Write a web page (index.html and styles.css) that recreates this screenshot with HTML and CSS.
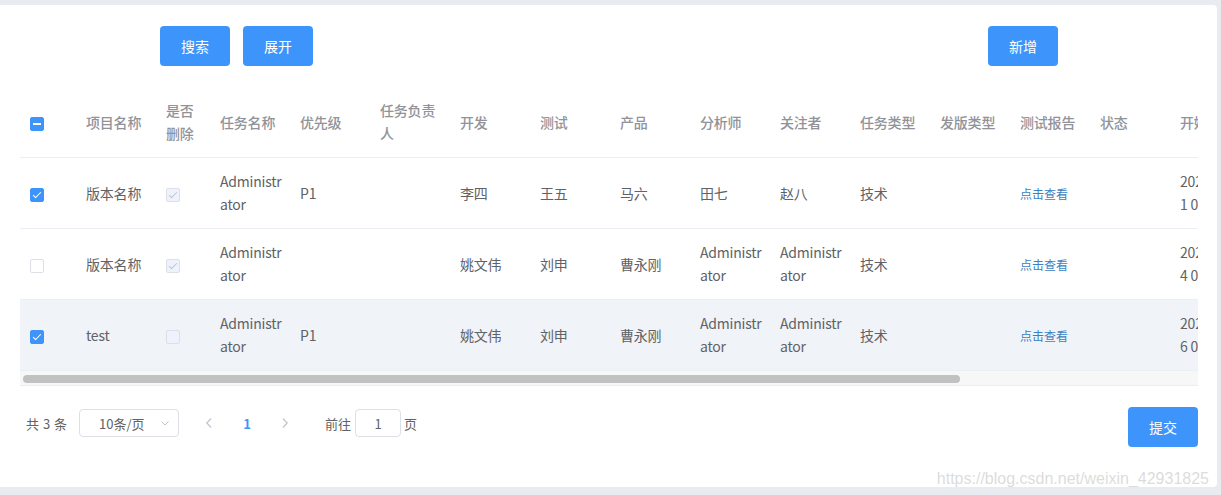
FILE: index.html
```html
<!DOCTYPE html>
<html lang="zh-CN">
<head>
    <meta charset="UTF-8">
    <meta name="viewport" content="width=device-width, initial-scale=1.0">
    <title>任务列表</title>
    <link rel="stylesheet" href="styles.css">
</head>
<body>

<div class="card">

    <!-- кнопки сверху -->
    <div class="toolbar">
        <button class="btn">搜索</button>
        <button class="btn">展开</button>
        <button class="btn btn-add">新增</button>
    </div>

    <!-- таблица -->
    <div class="table-wrap">
        <div class="table-body">
            <table class="task-table">
                <colgroup>
                    <col style="width:56px">
                    <col style="width:80px">
                    <col style="width:54px">
                    <col style="width:80px">
                    <col style="width:80px">
                    <col style="width:80px">
                    <col style="width:80px">
                    <col style="width:80px">
                    <col style="width:80px">
                    <col style="width:80px">
                    <col style="width:80px">
                    <col style="width:80px">
                    <col style="width:80px">
                    <col style="width:80px">
                    <col style="width:80px">
                    <col style="width:80px">
                    <col style="width:80px">
                    <col style="width:170px">
                </colgroup>
                <thead>
                    <tr>
                        <th><div class="cell"><span class="checkbox indeterminate"></span></div></th>
                        <th><div class="cell">项目名称</div></th>
                        <th><div class="cell">是否删除</div></th>
                        <th><div class="cell">任务名称</div></th>
                        <th><div class="cell">优先级</div></th>
                        <th><div class="cell">任务负责人</div></th>
                        <th><div class="cell">开发</div></th>
                        <th><div class="cell">测试</div></th>
                        <th><div class="cell">产品</div></th>
                        <th><div class="cell">分析师</div></th>
                        <th><div class="cell">关注者</div></th>
                        <th><div class="cell">任务类型</div></th>
                        <th><div class="cell">发版类型</div></th>
                        <th><div class="cell">测试报告</div></th>
                        <th><div class="cell">状态</div></th>
                        <th><div class="cell">开始时间</div></th>
                        <th><div class="cell">结束时间</div></th>
                        <th><div class="cell">操作</div></th>
                    </tr>
                </thead>
                <tbody>
                    <tr>
                        <td><div class="cell"><span class="checkbox checked"></span></div></td>
                        <td><div class="cell">版本名称</div></td>
                        <td><div class="cell"><span class="checkbox disabled checked"></span></div></td>
                        <td><div class="cell">Administrator</div></td>
                        <td><div class="cell">P1</div></td>
                        <td><div class="cell"></div></td>
                        <td><div class="cell">李四</div></td>
                        <td><div class="cell">王五</div></td>
                        <td><div class="cell">马六</div></td>
                        <td><div class="cell">田七</div></td>
                        <td><div class="cell">赵八</div></td>
                        <td><div class="cell">技术</div></td>
                        <td><div class="cell"></div></td>
                        <td><div class="cell"><a class="link">点击查看</a></div></td>
                        <td><div class="cell"></div></td>
                        <td><div class="cell date">2020-07-2<br>1 08:00</div></td>
                        <td><div class="cell date">2020-07-2<br>8 18:00</div></td>
                        <td><div class="cell"></div></td>
                    </tr>
                    <tr>
                        <td><div class="cell"><span class="checkbox"></span></div></td>
                        <td><div class="cell">版本名称</div></td>
                        <td><div class="cell"><span class="checkbox disabled checked"></span></div></td>
                        <td><div class="cell">Administrator</div></td>
                        <td><div class="cell"></div></td>
                        <td><div class="cell"></div></td>
                        <td><div class="cell">姚文伟</div></td>
                        <td><div class="cell">刘申</div></td>
                        <td><div class="cell">曹永刚</div></td>
                        <td><div class="cell">Administrator</div></td>
                        <td><div class="cell">Administrator</div></td>
                        <td><div class="cell">技术</div></td>
                        <td><div class="cell"></div></td>
                        <td><div class="cell"><a class="link">点击查看</a></div></td>
                        <td><div class="cell"></div></td>
                        <td><div class="cell date">2020-07-2<br>4 09:00</div></td>
                        <td><div class="cell date">2020-07-3<br>0 18:00</div></td>
                        <td><div class="cell"></div></td>
                    </tr>
                    <tr class="hover">
                        <td><div class="cell"><span class="checkbox checked"></span></div></td>
                        <td><div class="cell">test</div></td>
                        <td><div class="cell"><span class="checkbox disabled"></span></div></td>
                        <td><div class="cell">Administrator</div></td>
                        <td><div class="cell">P1</div></td>
                        <td><div class="cell"></div></td>
                        <td><div class="cell">姚文伟</div></td>
                        <td><div class="cell">刘申</div></td>
                        <td><div class="cell">曹永刚</div></td>
                        <td><div class="cell">Administrator</div></td>
                        <td><div class="cell">Administrator</div></td>
                        <td><div class="cell">技术</div></td>
                        <td><div class="cell"></div></td>
                        <td><div class="cell"><a class="link">点击查看</a></div></td>
                        <td><div class="cell"></div></td>
                        <td><div class="cell date">2020-07-2<br>6 09:00</div></td>
                        <td><div class="cell date">2020-08-0<br>1 18:00</div></td>
                        <td><div class="cell"></div></td>
                    </tr>
                </tbody>
            </table>
        </div>
        <!-- горизонтальный скролл -->
        <div class="scrollbar"><div class="thumb"></div></div>
    </div>

    <!-- пагинация и кнопка -->
    <div class="footer">
        <div class="pagination">
            <span class="total">共 3 条</span>
            <div class="sizes">
                <span>10条/页</span>
                <svg class="arrow" width="10" height="10" viewBox="0 0 10 10"><polyline points="1.5,3.5 5,7 8.5,3.5" fill="none" stroke="#c0c4cc" stroke-width="1"/></svg>
            </div>
            <span class="nav-btn">
                <svg width="8" height="12" viewBox="0 0 8 12"><polyline points="6,1.5 1.8,6 6,10.5" fill="none" stroke="#c0c4cc" stroke-width="1.2"/></svg>
            </span>
            <span class="nav-btn active">1</span>
            <span class="nav-btn">
                <svg width="8" height="12" viewBox="0 0 8 12"><polyline points="2,1.5 6.2,6 2,10.5" fill="none" stroke="#c0c4cc" stroke-width="1.2"/></svg>
            </span>
            <span class="jump">前往</span>
            <input class="page-input" type="text" value="1">
            <span class="jump-end">页</span>
        </div>
        <button class="btn">提交</button>
    </div>

    <div class="watermark">https://blog.csdn.net/weixin_42931825</div>
</div>

</body>
</html>
```

FILE: styles.css
```css
/* сброс */
* {
    margin: 0;
    padding: 0;
    box-sizing: border-box;
}

body {
    background-color: #e8ebef;
    font-family: "Noto Sans CJK SC", "Noto Sans", sans-serif;
    color: #606266;
    font-size: 14px;
}

/* карточка */
.card {
    position: relative;
    margin: 5px 4px 0 0;
    height: 482px;
    background-color: #fff;
    border-radius: 0 4px 4px 0;
    padding-top: 21px;
    overflow: hidden;
}

/* кнопки */
.btn {
    width: 70px;
    height: 40px;
    border: none;
    border-radius: 4px;
    background-color: #3d95fc;
    color: #fff;
    font-family: "Noto Sans CJK SC", sans-serif;
    font-size: 14px;
    cursor: pointer;
}

.toolbar {
    display: flex;
    gap: 13px;
    padding-left: 160px;
}

.btn-add {
    margin-left: 662px;
}

/* таблица */
.table-wrap {
    margin: 21px 0 0 20px;
    width: 1178px;
}

.table-body {
    overflow: hidden;
}

.task-table {
    table-layout: fixed;
    border-collapse: collapse;
    width: 1480px;
}

.task-table th,
.task-table td {
    padding: 12px 0;
    border-bottom: 1px solid #ebeef5;
    text-align: left;
    vertical-align: middle;
}

.task-table th {
    color: #909399;
    font-weight: 500;
}

.task-table .cell {
    padding: 0 5px 0 10px;
    line-height: 23px;
    letter-spacing: -0.2px;
    word-break: break-all;
}

.task-table .cell.date {
    white-space: nowrap;
}

.task-table tr.hover td {
    background-color: #f0f3f7;
}

.link {
    color: #3a82c2;
    font-size: 12px;
    letter-spacing: 0;
    cursor: pointer;
}

/* чекбоксы */
.checkbox {
    position: relative;
    display: inline-block;
    width: 14px;
    height: 14px;
    border: 1px solid #dcdfe6;
    border-radius: 2px;
    background-color: #fff;
    vertical-align: middle;
}

.checkbox.checked {
    background-color: #3d95fc;
    border-color: #3d95fc;
}

.checkbox.checked::after {
    content: "";
    position: absolute;
    left: 4px;
    top: 1px;
    width: 3px;
    height: 7px;
    border: 1px solid #fff;
    border-left: 0;
    border-top: 0;
    transform: rotate(45deg);
}

.checkbox.disabled {
    background-color: #edf2fc;
    border-color: #dcdfe6;
}

.checkbox.disabled.checked::after {
    border-color: #c0c4cc;
}

.checkbox.indeterminate {
    background-color: #3d95fc;
    border-color: #3d95fc;
}

.checkbox.indeterminate::before {
    content: "";
    position: absolute;
    left: 2px;
    right: 2px;
    top: 5px;
    height: 2px;
    background-color: #fff;
}

/* скролл */
.scrollbar {
    height: 15px;
    background-color: #f7f7f7;
    border-bottom: 1px solid #ebeef5;
    padding: 4px 0 0 3px;
}

.scrollbar .thumb {
    width: 937px;
    height: 8px;
    border-radius: 4px;
    background-color: #c1c1c1;
}

/* низ */
.footer {
    display: flex;
    justify-content: space-between;
    align-items: flex-start;
    margin-top: 21px;
    padding: 0 19px 0 26px;
}

.pagination {
    display: flex;
    align-items: center;
    margin-top: 2px;
    font-size: 13px;
    color: #606266;
}

.total {
    margin-right: 12px;
    word-spacing: 1px;
}

.sizes {
    display: flex;
    align-items: center;
    justify-content: space-between;
    width: 100px;
    height: 28px;
    border: 1px solid #dcdfe6;
    border-radius: 4px;
    padding: 0 8px 0 19px;
    margin-right: 11px;
}

.nav-btn {
    display: flex;
    align-items: center;
    justify-content: center;
    width: 38px;
    height: 28px;
    font-weight: bold;
}

.nav-btn.active {
    color: #3d95fc;
}

.jump {
    margin-left: 21px;
    margin-right: 4px;
}

.page-input {
    width: 46px;
    height: 28px;
    border: 1px solid #dcdfe6;
    border-radius: 4px;
    text-align: center;
    font-family: "Noto Sans CJK SC", sans-serif;
    font-size: 13px;
    color: #606266;
    outline: none;
}

.jump-end {
    margin-left: 3px;
}

/* водяной знак */
.watermark {
    position: absolute;
    right: 8px;
    bottom: -1px;
    font-family: "Liberation Sans", Arial, sans-serif;
    font-size: 16px;
    color: rgba(190, 190, 190, 0.55);
    pointer-events: none;
}
```
